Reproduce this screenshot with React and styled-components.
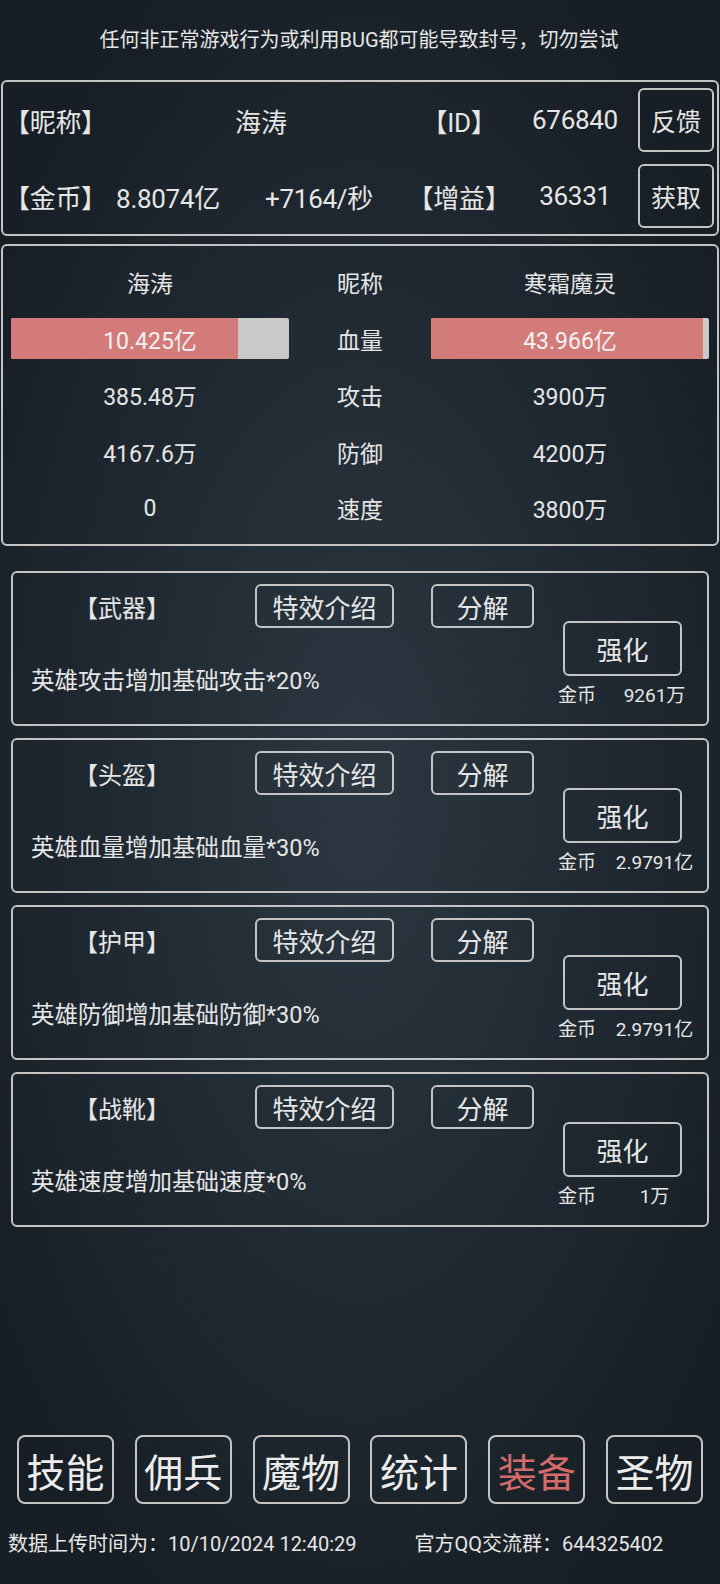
import React from 'react';
import styled, { createGlobalStyle } from 'styled-components';

const GlobalStyle = createGlobalStyle`
    html, body {
        margin: 0;
        padding: 0;
        background: #161d24;
    }
    * { box-sizing: border-box; }
`

const player = { name: '海涛', id: '676840', gold: '8.8074亿', rate: '+7164/秒', bonus: '36331' }

const stats = [
    { left: '385.48万', label: '攻击', right: '3900万' },
    { left: '4167.6万', label: '防御', right: '4200万' },
    { left: '0', label: '速度', right: '3800万' },
]

const equips = [
    { name: '【武器】', desc: '英雄攻击增加基础攻击*20%', cost: '9261万' },
    { name: '【头盔】', desc: '英雄血量增加基础血量*30%', cost: '2.9791亿' },
    { name: '【护甲】', desc: '英雄防御增加基础防御*30%', cost: '2.9791亿' },
    { name: '【战靴】', desc: '英雄速度增加基础速度*0%', cost: '1万' },
]

const tabs = ['技能', '佣兵', '魔物', '统计', '装备', '圣物']

const App = () => {
    return (
        <Page>
            <GlobalStyle />
            <Notice>任何非正常游戏行为或利用BUG都可能导致封号，切勿尝试</Notice>

            <InfoPanel>
                <Cell>【昵称】</Cell>
                <NameCell>{player.name}</NameCell>
                <Cell>【ID】</Cell>
                <Cell>{player.id}</Cell>
                <SmallButton>反馈</SmallButton>

                <Cell>【金币】</Cell>
                <Cell>{player.gold}</Cell>
                <Cell>{player.rate}</Cell>
                <Cell>【增益】</Cell>
                <Cell>{player.bonus}</Cell>
                <SmallButton>获取</SmallButton>
            </InfoPanel>

            <StatsPanel>
                <StatCell>{player.name}</StatCell>
                <StatCell>昵称</StatCell>
                <StatCell>寒霜魔灵</StatCell>

                <HpBar>
                    <HpFill style={{ width: '81.7%' }} />
                    <HpText>10.425亿</HpText>
                </HpBar>
                <StatCell>血量</StatCell>
                <HpBar>
                    <HpFill style={{ width: '97.8%' }} />
                    <HpText>43.966亿</HpText>
                </HpBar>

                {stats.map(s => (
                    <React.Fragment key={s.label}>
                        <StatCell>{s.left}</StatCell>
                        <StatCell>{s.label}</StatCell>
                        <StatCell>{s.right}</StatCell>
                    </React.Fragment>
                ))}
            </StatsPanel>

            <EquipList>
                {equips.map(e => (
                    <EquipCard key={e.name}>
                        <EquipMain>
                            <EquipTop>
                                <EquipTitle>{e.name}</EquipTitle>
                                <OutlineButton width={139}>特效介绍</OutlineButton>
                                <OutlineButton width={103}>分解</OutlineButton>
                            </EquipTop>
                            <EquipDesc>{e.desc}</EquipDesc>
                        </EquipMain>
                        <EquipSide>
                            <UpgradeButton>强化</UpgradeButton>
                            <Cost>
                                <span>金币</span>
                                <CostValue>{e.cost}</CostValue>
                            </Cost>
                        </EquipSide>
                    </EquipCard>
                ))}
            </EquipList>

            <TabBar>
                {tabs.map(t => (
                    <TabButton key={t} active={t === '装备'}>{t}</TabButton>
                ))}
            </TabBar>

            <Footer>
                <span>数据上传时间为：10/10/2024 12:40:29</span>
                <span>官方QQ交流群：644325402</span>
            </Footer>
        </Page>
    );
};

const Page = styled.div`
    width: 720px;
    height: 1584px;
    display: flex;
    flex-direction: column;
    color: #e6e6e6;
    font-family: Roboto, "Noto Sans CJK SC", sans-serif;
    background: radial-gradient(ellipse 62% 58% at 50% 50%, #2c3741 0%, #222c35 45%, #171e25 100%);
    overflow: hidden;
`
const Notice = styled.div`
    height: 80px;
    line-height: 80px;
    text-align: center;
    font-size: 20px;
    padding-right: 2px;
`
const InfoPanel = styled.div`
    margin: 0 1px;
    height: 156px;
    border: 2px solid #c4c4c4;
    border-radius: 6px;
    display: grid;
    grid-template-columns: 97px 134px 168px 112px 120px 1fr;
    grid-template-rows: 76px 76px;
    align-items: center;
    padding-left: 1px;
    font-size: 26px;
`
const Cell = styled.div`
    text-align: center;
    white-space: nowrap;
    letter-spacing: -0.3px;
`
const NameCell = styled.div`
    grid-column: span 2;
    text-align: center;
    padding-left: 18px;
`
const SmallButton = styled.div`
    justify-self: center;
    width: 76px;
    height: 64px;
    border: 2px solid #c4c4c4;
    border-radius: 6px;
    display: flex;
    align-items: center;
    justify-content: center;
    font-size: 25px;
`
const StatsPanel = styled.div`
    margin: 8px 1px 0;
    height: 302px;
    border: 2px solid #c4c4c4;
    border-radius: 6px;
    display: grid;
    grid-template-columns: 278px 1fr 278px;
    grid-auto-rows: 56.5px;
    align-items: center;
    padding: 8px 8px 0;
    font-size: 23px;
`
const StatCell = styled.div`
    text-align: center;
`
const HpBar = styled.div`
    position: relative;
    height: 41px;
    background: #c9c9c9;
    border-radius: 2px;
    overflow: hidden;
    display: flex;
    align-items: center;
    justify-content: center;
`
const HpFill = styled.div`
    position: absolute;
    left: 0;
    top: 0;
    bottom: 0;
    background: #d37b79;
`
const HpText = styled.span`
    position: relative;
    color: #f2f2f2;
`
const EquipList = styled.div`
    margin: 25px 11px 0;
    display: flex;
    flex-direction: column;
    gap: 12px;
`
const EquipCard = styled.div`
    height: 155px;
    border: 2px solid #c4c4c4;
    border-radius: 6px;
    display: flex;
`
const EquipMain = styled.div`
    width: 545px;
    flex-shrink: 0;
    padding-top: 11px;
`
const EquipTop = styled.div`
    display: flex;
    align-items: center;
    height: 44px;
`
const EquipTitle = styled.div`
    width: 218px;
    flex-shrink: 0;
    margin-right: 24px;
    text-align: center;
    font-size: 24px;
`
const OutlineButton = styled.div`
    width: ${p => p.width}px;
    flex-shrink: 0;
    height: 44px;
    margin-right: 37px;
    border: 2px solid #c4c4c4;
    border-radius: 6px;
    display: flex;
    align-items: center;
    justify-content: center;
    font-size: 26px;
    &:last-child { margin-right: 0; }
`
const EquipDesc = styled.div`
    margin-top: 40px;
    padding-left: 18px;
    line-height: 26px;
    font-size: 23.5px;
`
const EquipSide = styled.div`
    flex: 1;
    padding-top: 48px;
    display: flex;
    flex-direction: column;
`
const UpgradeButton = styled.div`
    width: 119px;
    height: 55px;
    margin-left: 5px;
    border: 2px solid #c4c4c4;
    border-radius: 6px;
    display: flex;
    align-items: center;
    justify-content: center;
    font-size: 26px;
`
const Cost = styled.div`
    margin-top: 10px;
    display: flex;
    line-height: 20px;
    font-size: 19px;
`
const CostValue = styled.span`
    flex: 1;
    text-align: center;
    padding-left: 6px;
`
const TabBar = styled.div`
    margin-top: auto;
    padding: 0 17px;
    display: flex;
    justify-content: space-between;
`
const TabButton = styled.div`
    width: 97px;
    height: 69px;
    border: 2px solid #c4c4c4;
    border-radius: 8px;
    display: flex;
    align-items: center;
    justify-content: center;
    font-size: 39px;
    color: ${p => (p.active ? '#d46b6b' : '#ececec')};
`
const Footer = styled.div`
    height: 80px;
    padding: 28px 0 0 8px;
    display: flex;
    gap: 58px;
    line-height: 24px;
    font-size: 20px;
`

export default App
